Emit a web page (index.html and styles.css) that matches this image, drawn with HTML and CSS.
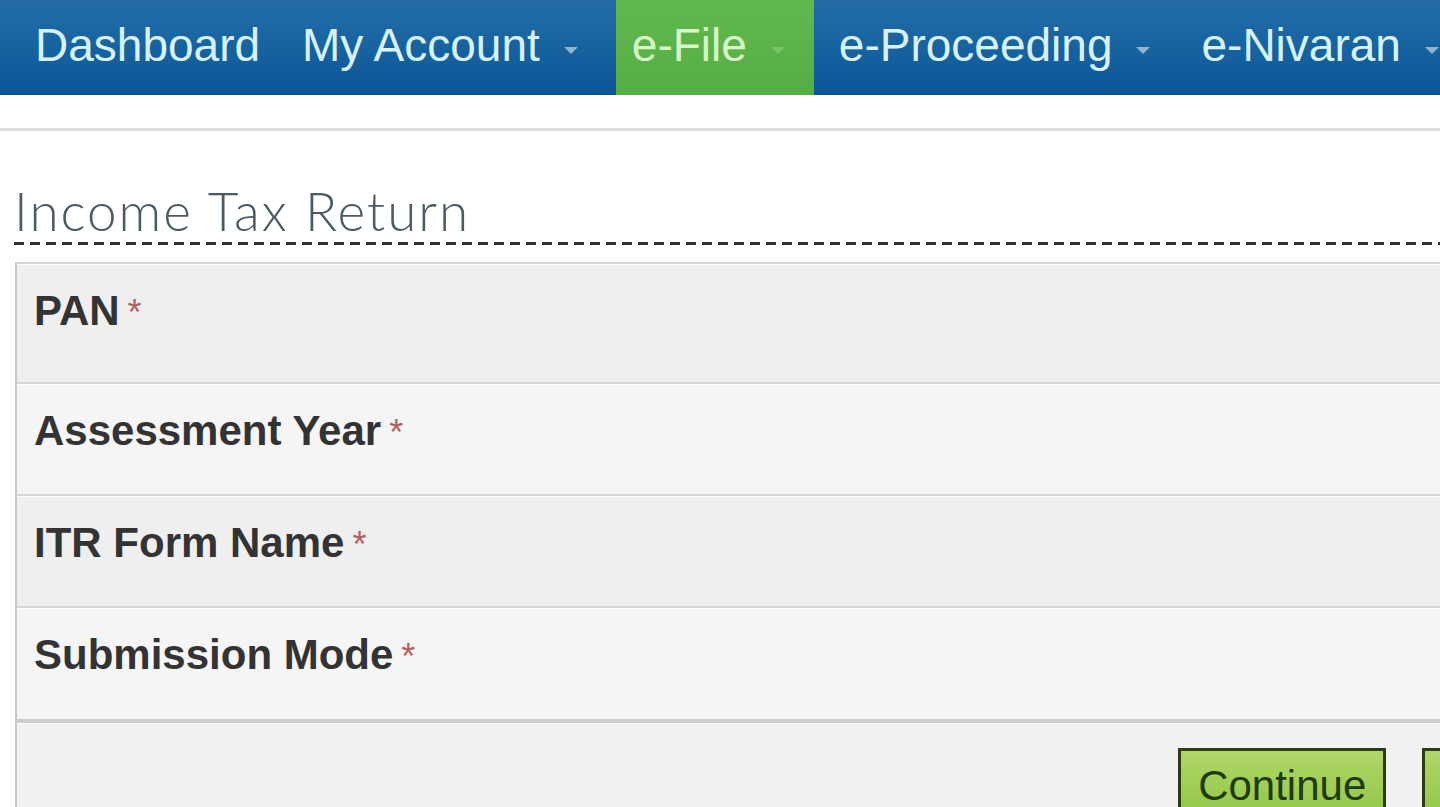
FILE: index.html
```html
<!DOCTYPE html>
<html lang="en">
<head>
<meta charset="utf-8">
<title>Income Tax Return</title>
<link rel="stylesheet" href="styles.css">
</head>
<body>
<div class="page">
  <nav class="topnav">
    <a class="nav-item first">Dashboard</a>
    <a class="nav-item account">My Account<span class="caret"></span></a>
    <a class="nav-item active">e-File<span class="caret"></span></a>
    <a class="nav-item">e-Proceeding<span class="caret"></span></a>
    <a class="nav-item">e-Nivaran<span class="caret"></span></a>
  </nav>
  <div class="subbar"></div>
  <main class="content">
    <h1 class="title">Income Tax Return</h1>
    <form class="panel">
      <div class="row first"><label class="label">PAN<span class="req">*</span></label></div>
      <div class="row alt"><label class="label">Assessment Year<span class="req">*</span></label></div>
      <div class="row"><label class="label">ITR Form Name<span class="req">*</span></label></div>
      <div class="row alt last"><label class="label">Submission Mode<span class="req">*</span></label></div>
      <div class="actions">
        <button type="button" class="btn">Continue</button>
        <button type="button" class="btn secondary">Cancel</button>
      </div>
    </form>
  </main>
</div>
</body>
</html>
```

FILE: styles.css
```css
html, body {
  margin: 0;
  padding: 0;
  background: #ffffff;
  overflow: hidden;
}
body {
  font-family: "Liberation Sans", Arial, sans-serif;
}
.page {
  width: 1760px;
}
.topnav {
  display: flex;
  height: 95px;
  padding-left: 19px;
  background: linear-gradient(#236ca6 0%, #1864a1 45%, #0c5595 100%);
}
.nav-item {
  display: flex;
  align-items: center;
  padding: 0 26px 6px 25px;
  font-size: 46px;
  color: #d8f2fc;
  text-decoration: none;
  white-space: nowrap;
}
.nav-item.first {
  padding-left: 16px;
}
.nav-item.account {
  padding-left: 16px;
  padding-right: 38px;
}
.nav-item.active {
  padding-left: 16px;
  padding-right: 29px;
  background: linear-gradient(#61b84e, #56ad45);
  color: #d6f7c6;
}
.caret {
  width: 0;
  height: 0;
  margin-left: 24px;
  margin-top: 12px;
  border-left: 7px solid transparent;
  border-right: 7px solid transparent;
  border-top: 7px solid #93b2cc;
}
.nav-item.active .caret {
  border-top-color: #7cc269;
}
.subbar {
  height: 33px;
  border-bottom: 3px solid #dcdcdc;
}
.content {
  padding-left: 14px;
}
.title {
  margin: 49px 0 0;
  padding-bottom: 3px;
  font-family: "Lato", "Open Sans", sans-serif;
  font-weight: 300;
  font-size: 53px;
  line-height: 62px;
  letter-spacing: 2px;
  color: #4b5b63;
  background: repeating-linear-gradient(to right, #333333 0 10px, transparent 10px 16px) left bottom / 100% 3px no-repeat;
}
.panel {
  margin: 17px 0 0 1px;
  border-left: 2px solid #c9c9c9;
  border-top: 2px solid #d4d4d4;
  background: #f0f0f0;
}
.row {
  padding: 24px 0 40px 17px;
  background: #efefef;
  border-bottom: 2px solid #d6d6d6;
  box-shadow: inset 0 1px 0 #ffffff;
}
.row.first {
  padding-bottom: 48px;
}
.row.alt {
  background: #f5f5f5;
}
.row.last {
  padding-bottom: 41px;
  border-bottom: 4px solid #cdcdcd;
}
.label {
  display: block;
  font-size: 42px;
  line-height: 46px;
  font-weight: bold;
  color: #333333;
}
.req {
  margin-left: 8px;
  font-weight: normal;
  font-size: 36px;
  line-height: 1;
  color: #b35f5f;
}
.actions {
  display: flex;
  justify-content: flex-end;
  gap: 36px;
  padding: 25px 144px 20px 0;
  background: #f1f1f1;
  box-shadow: inset 0 1px 0 #ffffff;
}
.btn {
  padding: 11px 17px 12px;
  font-family: "Liberation Sans", Arial, sans-serif;
  font-size: 42px;
  line-height: 48px;
  color: #1f3b0d;
  background: linear-gradient(#b0d769, #8ec444);
  border: 3px solid #2c3c14;
  border-radius: 0;
}
.btn.secondary {
  padding-left: 40px;
}
```
